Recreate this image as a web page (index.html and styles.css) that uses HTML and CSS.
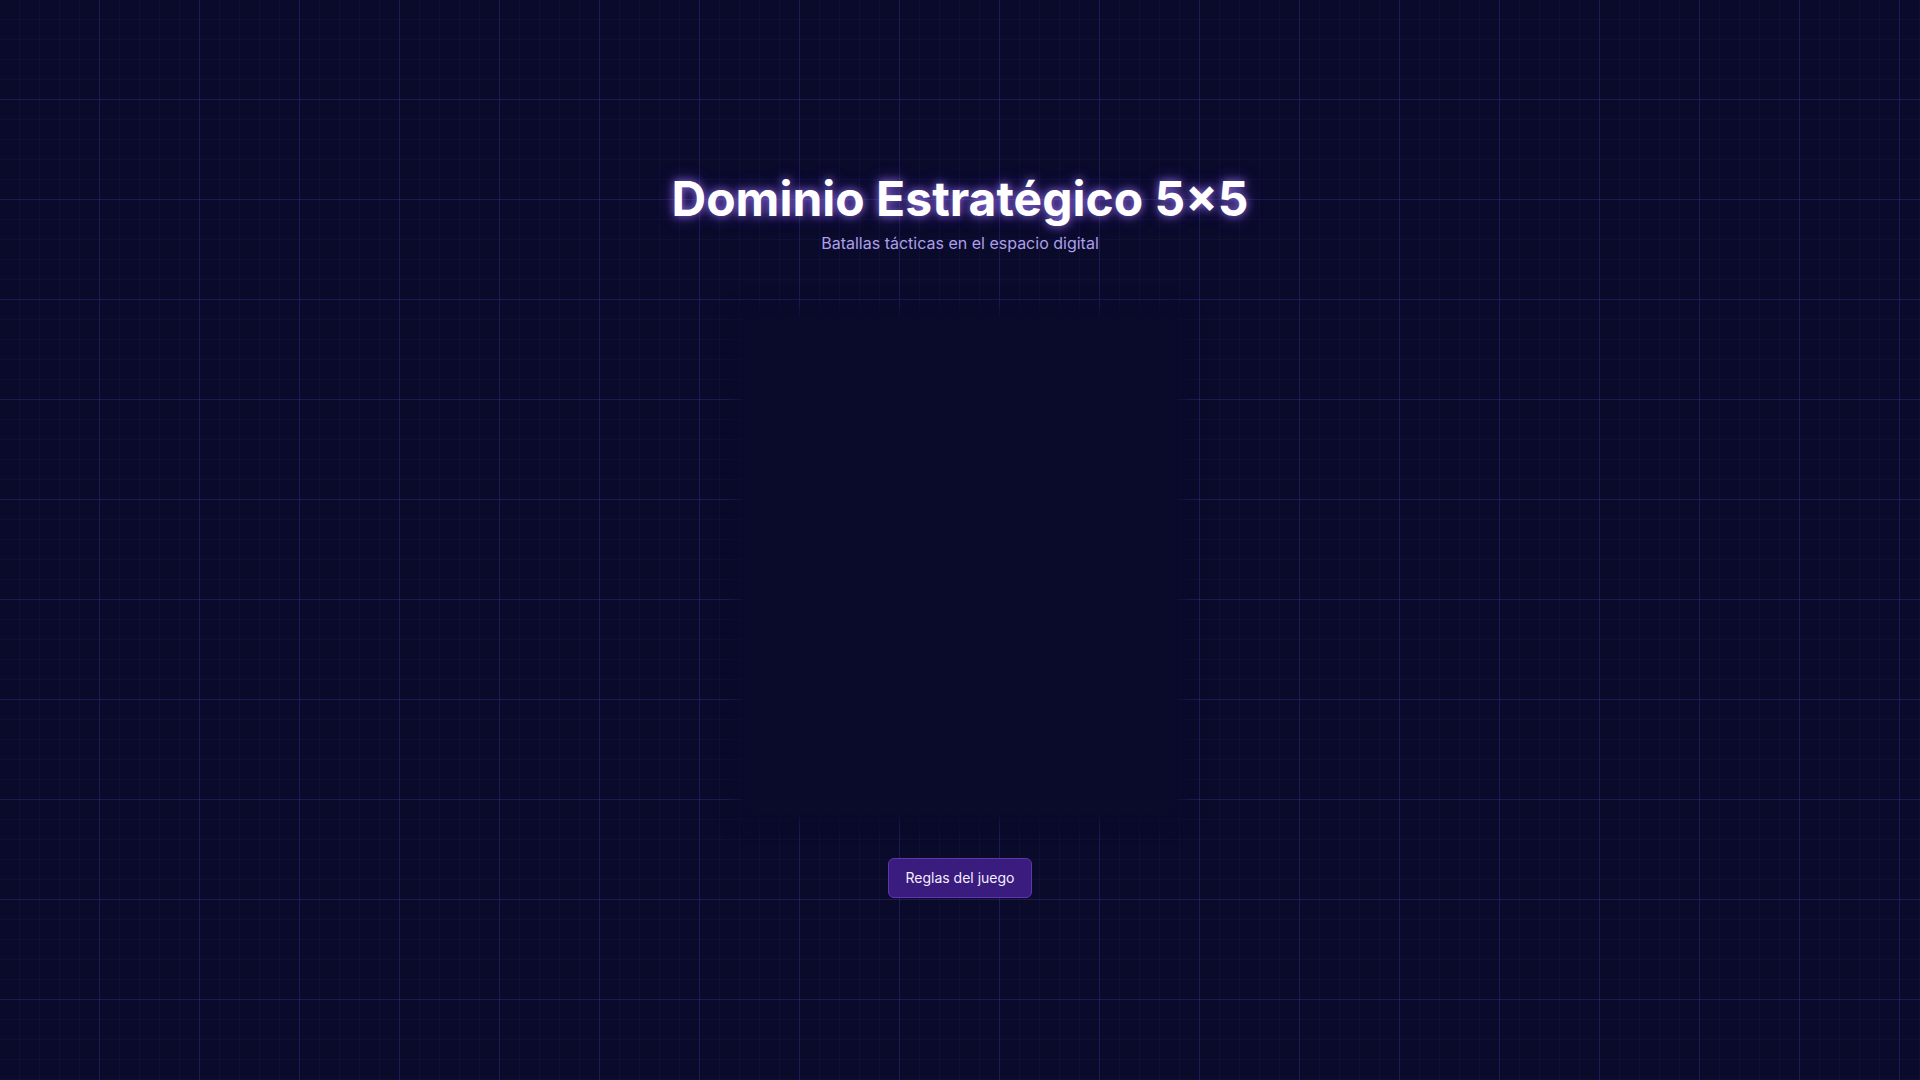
FILE: index.html
```html
<!DOCTYPE html>
<html lang="es">
<head>
<meta charset="utf-8">
<title>Dominio Estratégico 5×5</title>
<link rel="stylesheet" href="styles.css">
</head>
<body>
<main class="app">
  <header class="header">
    <h1 class="title">Dominio Estratégico 5×5</h1>
    <p class="subtitle">Batallas tácticas en el espacio digital</p>
  </header>
  <section class="board" aria-label="Tablero"></section>
  <button class="rules-btn" type="button">Reglas del juego</button>
</main>
</body>
</html>
```
FILE: styles.css
```css
html, body {
  margin: 0;
  padding: 0;
  height: 100%;
}

body {
  background-color: #0a0a2b;
  background-image:
    linear-gradient(to right, transparent 99px, rgba(80, 70, 200, 0.2) 99px, rgba(80, 70, 200, 0.2) 100px),
    linear-gradient(to bottom, transparent 99px, rgba(80, 70, 200, 0.2) 99px, rgba(80, 70, 200, 0.2) 100px),
    linear-gradient(to right, transparent 19px, rgba(80, 70, 200, 0.08) 19px, rgba(80, 70, 200, 0.08) 20px),
    linear-gradient(to bottom, transparent 19px, rgba(80, 70, 200, 0.08) 19px, rgba(80, 70, 200, 0.08) 20px);
  background-size: 100px 100px, 100px 100px, 20px 20px, 20px 20px;
  font-family: Inter, "Noto Sans", sans-serif;
  color: #ffffff;
  overflow: hidden;
}

.app {
  display: flex;
  flex-direction: column;
  align-items: center;
  padding-top: 170px;
}

.header {
  display: flex;
  flex-direction: column;
  align-items: center;
}

.title {
  margin: 0;
  font-size: 48px;
  line-height: 1.2;
  font-weight: 700;
  color: #ffffff;
  letter-spacing: 0;
  text-shadow: 0 0 8px rgba(170, 130, 255, 0.8), 0 0 18px rgba(120, 80, 255, 0.45);
}

.subtitle {
  margin: 3px 0 0;
  font-size: 16px;
  line-height: 24px;
  color: #ad9fea;
}

.board {
  width: 430px;
  height: 496px;
  margin-top: 63px;
  background: #0a0a2b;
  box-shadow: 0 0 16px 8px #0a0a2b;
}

.rules-btn {
  margin-top: 44px;
  padding: 10px 16px;
  font-family: Inter, "Noto Sans", sans-serif;
  font-size: 14px;
  line-height: 18px;
  color: #f2eeff;
  background: #3a1b7e;
  border: 1px solid #5b38ad;
  border-radius: 6px;
  cursor: pointer;
}
```
